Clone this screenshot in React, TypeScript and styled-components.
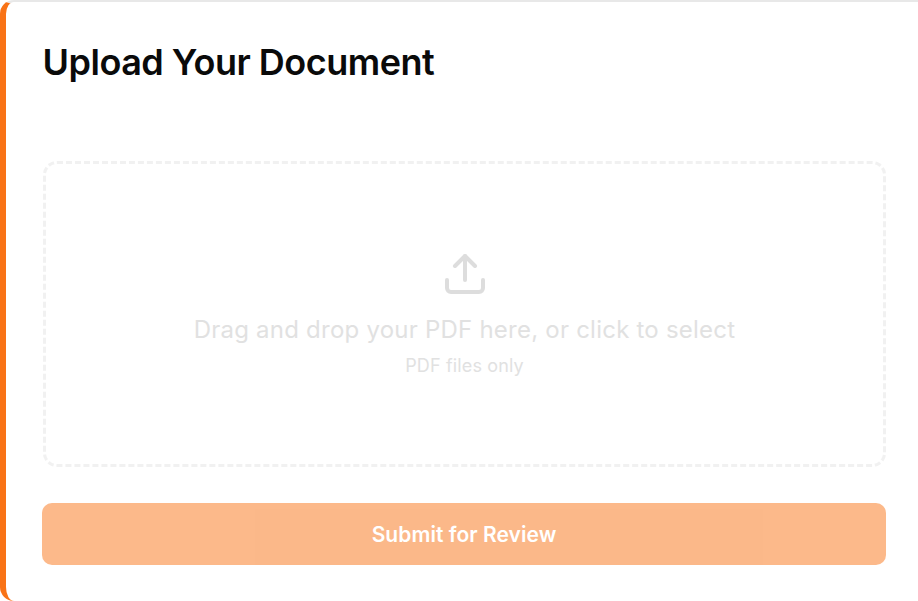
import styled, { createGlobalStyle } from "styled-components";
import { Upload } from "lucide-react";

const GlobalStyle = createGlobalStyle`
  html, body {
    margin: 0;
    padding: 0;
    background: #ffffff;
    font-family: Inter, "Liberation Sans", sans-serif;
  }
`;

const Card = styled.section`
  box-sizing: border-box;
  width: 918px;
  height: 601px;
  padding: 35px 32px 30px 36px;
  background: #ffffff;
  border-top: 2px solid #e8e8e8;
  border-left: 6px solid #f97316;
  border-radius: 14px 0 0 14px;
  display: flex;
  flex-direction: column;
`;

const Title = styled.h2`
  margin: 0 0 74px;
  padding-left: 0.5px;
  font-size: 36px;
  line-height: 50px;
  font-weight: 600;
  letter-spacing: -0.5px;
  color: #0a0a0a;
`;

const DropZone = styled.div`
  box-sizing: border-box;
  flex-shrink: 0;
  height: 306px;
  margin-left: 1px;
  border: 3px dashed #e5e5e5;
  border-radius: 14px;
  opacity: 0.5;
  display: flex;
  flex-direction: column;
  align-items: center;
  justify-content: center;
`;

const UploadIcon = styled(Upload)`
  width: 48px;
  height: 48px;
  color: #bdbdbd;
  margin-bottom: 16px;
`;

const Hint = styled.p`
  margin: 0 0 8px;
  font-size: 24px;
  line-height: 32px;
  letter-spacing: 0.23px;
  color: #c4c4c4;
`;

const SubHint = styled.p`
  margin: 0;
  font-size: 18px;
  line-height: 24px;
  letter-spacing: 0.15px;
  color: #c4c4c4;
`;

const SubmitButton = styled.button`
  flex-shrink: 0;
  margin-top: 36px;
  height: 62px;
  border: none;
  border-radius: 10px;
  background: #f97316;
  opacity: 0.5;
  color: #ffffff;
  font-family: inherit;
  font-size: 21px;
  font-weight: 600;
  letter-spacing: 0.05px;
`;

export default function App() {
  return (
    <>
      <GlobalStyle />
      <Card>
        <Title>Upload Your Document</Title>
        <DropZone>
          <UploadIcon strokeWidth={2} />
          <Hint>Drag and drop your PDF here, or click to select</Hint>
          <SubHint>PDF files only</SubHint>
        </DropZone>
        <SubmitButton disabled>Submit for Review</SubmitButton>
      </Card>
    </>
  );
}
